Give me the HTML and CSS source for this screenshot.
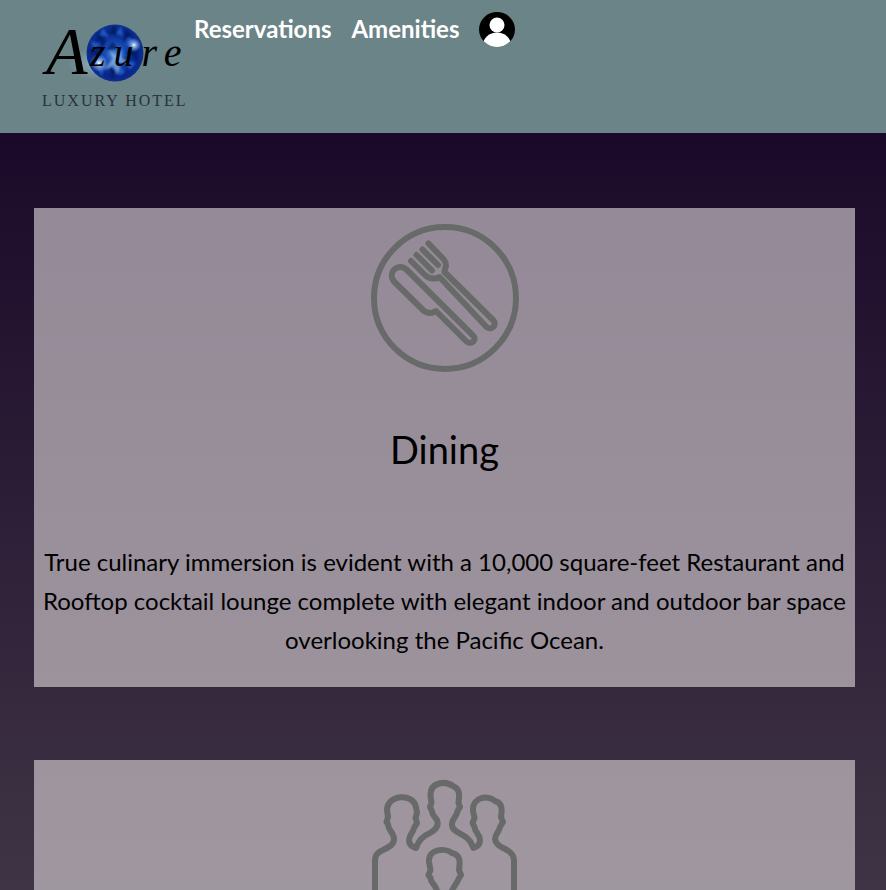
FILE: index.html
```html
<!DOCTYPE html>
<html lang="en">
<head>
<meta charset="utf-8">
<meta name="viewport" content="width=device-width, initial-scale=1">
<title>Azure Luxury Hotel</title>
<link rel="stylesheet" href="styles.css">
</head>
<body>
<header class="site-header">
  <a class="logo" href="#">
    <svg viewBox="0 0 150 100" width="150" height="100" role="img" aria-label="Azure Luxury Hotel">
      <defs>
        <radialGradient id="gem" cx="50%" cy="52%" r="52%">
          <stop offset="0" stop-color="#4f8ad8"/>
          <stop offset=".35" stop-color="#164ab0"/>
          <stop offset=".75" stop-color="#082488"/>
          <stop offset="1" stop-color="#0e3290"/>
        </radialGradient>
        <radialGradient id="glow">
          <stop offset="0" stop-color="#fff"/>
          <stop offset=".3" stop-color="#bfe4ff" stop-opacity=".7"/>
          <stop offset="1" stop-color="#9fd0ff" stop-opacity="0"/>
        </radialGradient>
        <clipPath id="gem-edge"><circle cx="79" cy="41" r="28"/></clipPath>
        <filter id="soft"><feGaussianBlur stdDeviation="1"/></filter>
      </defs>
      <ellipse cx="58" cy="52" rx="26" ry="16" fill="url(#glow)" opacity=".4"/>
      <circle cx="79" cy="41" r="28.500" fill="url(#gem)"/>
      <g clip-path="url(#gem-edge)">
        <g filter="url(#soft)">
          <path fill="#061a63" opacity=".8" d="M60 20l10 8-4 8zM78 12l5 12-9-3zM90 17l-3 12 10-5zM101 38l-12 2 12 8zM92 55l-7-9 11 1zM76 67l-4-14 9 5zM61 57l8-8 1 11zM52 39l12-4-2 9zM70 38l7-8 5 7z"/>
          <path fill="#2a6cd8" opacity=".7" d="M67 16l6 9-9-2zM85 14l2 10-7-2zM98 28l-9 7 3-10zM100 51l-11-3 5 10zM84 64l-2-12 7 8zM66 64l4-12-9 4zM55 29l10 3-8 5zM84 34l-6 8 10 0z"/>
          <path fill="#9ccbff" opacity=".6" d="M77 46l-4-7 8 5 3-7 2 9 8 5-10 0-2 12-5-9-9 4z"/>
        </g>
      </g>
      <circle cx="98" cy="33" r="7" fill="url(#glow)"/>
      <circle cx="63" cy="51" r="9" fill="url(#glow)"/>
      <text class="logo-initial" x="10" y="62">A</text>
      <text class="logo-script" x="54" y="54">zure</text>
      <text class="logo-caption" x="6" y="94">LUXURY HOTEL</text>
    </svg>
  </a>
  <nav class="site-nav">
    <a href="#">Reservations</a>
    <a href="#">Amenities</a>
    <a class="account" href="#" aria-label="Account">
      <svg viewBox="0 0 36 35" width="36" height="35" aria-hidden="true">
        <defs><clipPath id="disc"><ellipse cx="18" cy="17.500" rx="18" ry="17.500"/></clipPath></defs>
        <g clip-path="url(#disc)">
          <rect width="36" height="35"/>
          <circle cx="18" cy="13" r="7.500" fill="#fff"/>
          <ellipse cx="18" cy="33" rx="14" ry="12.500" fill="#fff"/>
        </g>
      </svg>
    </a>
  </nav>
</header>
<main class="amenities">
  <section class="card">
    <svg class="card-icon" viewBox="0 0 148 148" width="148" height="148" aria-hidden="true">
      <circle cx="74" cy="74" r="71"/>
      <path d="M51.500 25.500L67 41M45.500 31L61 46.500"/>
      <path d="M57.500 19.500L72.500 35q4 5 1.500 10l-.5 3L122 96c5 5-2 11-6.500 7L68.500 53l-2 1q-7 2-12.500-3L40 37"/>
      <path d="M36 46c-9-8-20 2-13 11.500L53 87q6 4 12 0L95.500 117.500c5 4 11-2 6.500-6z"/>
    </svg>
    <h2>Dining</h2>
    <p>True culinary immersion is evident with a 10,000 square-feet Restaurant and Rooftop cocktail lounge complete with elegant indoor and outdoor bar space overlooking the Pacific Ocean.</p>
  </section>
  <section class="card">
    <svg class="card-icon" viewBox="0 3 148 148" width="148" height="148" aria-hidden="true">
      <path d="M4 151V87Q4 81 10 78C18 74 23 72 23 66C23 60 17 57 17 51L15.500 49L17 44L16 37C16 22 42 19 45 34L46 40L44.500 45L46 50L43 55C42 60 38 62 38 67Q38 73 45 75C48 66 54 62 59 60C66 56 68 52 66 47C64 44 61 42 60.500 37L59 34L60.500 30L59.500 23C59 8 75 8 82 13C90 16 88 24 87.500 30L89 34L86.500 38C86 44 81 45 81 51C80 58 90 60 96 65C101 69 101 73 102.500 75Q109 73 109 67C109 61 104 60 103.500 54L101.500 50L103.500 45L102 38C101 23 118 22 124 28C132 30 131 38 130 44L132 49L129 54C128 59 124 61 124 66C125 72 130 74 136 77Q143 81 143 87V151"/>
      <path d="M66 118C64 110 60 111 59.500 105L57.500 102L59.500 97L58 89C57 75 75 75 81 80C90 82 89 90 88 97L90 102L87.500 106C86 111 83 112 81 118Q74 125 66 118Z"/>
    </svg>
  </section>
</main>
</body>
</html>
```
FILE: styles.css
```css
* { box-sizing: border-box; }

body {
  margin: 0;
  height: 100vh;
  overflow: hidden;
  display: flex;
  flex-direction: column;
  background: linear-gradient(#16032a, #1b0929 15%, #3f3445);
  color: #000;
  font-family: Lato, sans-serif;
}

.site-header {
  flex: none;
  display: flex;
  align-items: flex-start;
  min-height: 133px;
  padding: 12px 36px;
  background: #6b8488;
}

.logo svg,
.account svg { display: block; }

.logo svg { overflow: visible; }

.logo-initial,
.logo-script {
  font-family: "Liberation Serif", serif;
  font-style: italic;
}

.logo-initial { font-size: 68px; }

.logo-script {
  font-size: 40px;
  letter-spacing: 8px;
}

.logo-caption {
  font-family: "Liberation Serif", serif;
  font-size: 16px;
  letter-spacing: 2px;
  fill: #263338;
}

.site-nav {
  display: flex;
  align-items: flex-start;
  gap: 20px;
  margin-left: 8px;
}

.site-nav a {
  color: #fff;
  font-size: 24px;
  font-weight: 700;
  line-height: 34px;
  text-decoration: none;
}

.amenities {
  flex: 1;
  min-height: 0;
  overflow: hidden;
  display: flex;
  flex-direction: column;
  gap: 73px;
  padding: 75px 31px 0 34px;
}

.card {
  flex: none;
  padding: 16px 0 28px;
  background: rgba(208, 200, 204, 0.67);
  text-align: center;
}

.card-icon {
  display: block;
  margin: 0 auto;
  fill: none;
  stroke: #686a69;
  stroke-width: 6;
  stroke-linecap: round;
  stroke-linejoin: round;
}

h2 {
  margin: 52px 0 68px;
  font-size: 38px;
  font-weight: 400;
  line-height: 50px;
}

p {
  margin: 0;
  font-size: 24px;
  line-height: 39px;
}
```
